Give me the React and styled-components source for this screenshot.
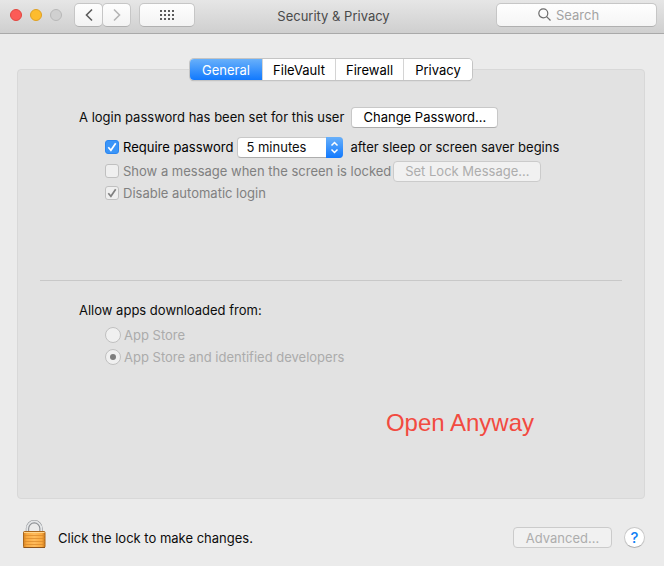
import React, { useState } from 'react';
import styled, { createGlobalStyle, css } from 'styled-components';

const GlobalStyle = createGlobalStyle`
  * {
    box-sizing: border-box;
  }

  body {
    margin: 0;
    background: #ebebeb;
    color: #0c0c0c;
    font-family: Inter, "Liberation Sans", sans-serif;
    font-size: 13px;
    line-height: 16px;
  }

  button, input, select {
    margin: 0;
    font: inherit;
    color: inherit;
  }
`;

const Window = styled.div`
  display: flex;
  flex-direction: column;
  min-height: 100vh;
`;

const Toolbar = styled.header`
  display: grid;
  grid-template-columns: 1fr auto 1fr;
  align-items: center;
  height: 34px;
  padding: 0 7px 4px 10px;
  background: linear-gradient(#e6e6e6, #cfcfcf);
  border-bottom: 1px solid #a9a9a9;
`;

const ToolbarLeft = styled.div`
  display: flex;
  align-items: center;
`;

const Lights = styled.div`
  display: flex;
  gap: 8px;
  margin-right: 13px;
`;

const Light = styled.button`
  width: 12px;
  height: 12px;
  padding: 0;
  border: 1px solid ${({ $edge }) => $edge};
  border-radius: 50%;
  background: ${({ $fill }) => $fill};
`;

const ToolButton = styled.button`
  display: flex;
  align-items: center;
  justify-content: center;
  width: ${({ $wide }) => ($wide ? '56px' : '29px')};
  height: 24px;
  margin-left: ${({ $wide }) => ($wide ? '8px' : '-1px')};
  padding: 0;
  border: 1px solid #c6c6c6;
  border-bottom-color: #b0b0b0;
  border-radius: 5px;
  background: linear-gradient(#fefefe, #f3f3f3);
  color: #5c5c5c;

  &:disabled {
    color: #b5b5b5;
  }
`;

const Title = styled.h1`
  margin: 0;
  padding-top: 3px;
  font-size: 13px;
  font-weight: 400;
  color: #4a4a4a;
`;

const Search = styled.label`
  display: flex;
  align-items: center;
  justify-self: end;
  gap: 5px;
  width: 161px;
  height: 24px;
  padding-left: 41px;
  border: 1px solid #c6c6c6;
  border-bottom-color: #b0b0b0;
  border-radius: 5px;
  background: linear-gradient(#fefefe, #f5f5f5);
  color: #6c6c6c;
`;

const SearchInput = styled.input`
  flex: 1;
  min-width: 0;
  padding: 0;
  border: 0;
  outline: 0;
  background: none;

  &::placeholder {
    color: #a3a3a3;
    opacity: 1;
  }
`;

const Main = styled.main`
  display: flex;
  flex: 1;
  flex-direction: column;
  padding: 25px 19px 0 17px;
`;

const Tabs = styled.div`
  display: flex;
  align-self: center;
  z-index: 1;
  height: 21px;
  margin-bottom: -11px;
  border-radius: 4px;
  background: #fff;
  box-shadow: 0 0 0 1px #c4c4c4, 0 1px 1px 0 #a0a0a0;
  overflow: hidden;
`;

const Tab = styled.button`
  width: ${({ $width }) => $width};
  padding: 0;
  border: 0;
  border-left: 1px solid #d4d4d4;
  background: #fff;
  color: #000;

  &:first-child {
    border-left: 0;
  }

  ${({ $active }) => $active && css`
    background: linear-gradient(#68b0fa, #1179fe);
    color: #fff;
  `}
`;

const Panel = styled.section`
  display: flex;
  flex: 1;
  flex-direction: column;
  padding: 36px 22px 61px;
  border: 1px solid #d8d8d8;
  border-radius: 4px;
  background: #e2e2e2;
`;

const Group = styled.div`
  display: flex;
  flex-direction: column;
  padding-left: 39px;
`;

const Row = styled.div`
  display: flex;
  align-items: center;
  min-height: 22px;
  padding-left: ${({ $indent }) => ($indent ? '26px' : '0')};
  margin-bottom: ${({ $gap }) => $gap || '0'};
`;

const Button = styled.button`
  width: ${({ $width }) => $width};
  height: 21px;
  margin-left: ${({ $gap }) => $gap || '0'};
  padding: 0;
  border: 1px solid #c8c8c8;
  border-bottom-color: #adadad;
  border-radius: 4px;
  background: #fff;
  color: #000;
  white-space: nowrap;

  &:disabled {
    border-color: #cbcbcb;
    background: #f1f1f1;
    color: #adadad;
  }
`;

const Option = styled.label`
  display: flex;
  align-items: center;
  gap: ${({ $gap }) => $gap || '4px'};
  color: ${({ $color }) => $color || '#000'};
  white-space: nowrap;
`;

const CheckWrap = styled.span`
  display: grid;

  > * {
    grid-area: 1 / 1;
  }

  svg {
    z-index: 1;
    pointer-events: none;
    color: #fff;
  }

  input:disabled + svg {
    color: #808080;
  }

  input:not(:checked) + svg {
    visibility: hidden;
  }
`;

const CheckInput = styled.input`
  appearance: none;
  width: 14px;
  height: 14px;
  border: 1px solid #b8b8b8;
  border-radius: 3px;
  background: #fff;

  &:checked {
    border-color: #2b86f0;
    background: #3b95f8;
  }

  &:disabled {
    border-color: #c0c0c0;
    background: #efefef;
  }
`;

const RadioInput = styled.input`
  display: grid;
  place-content: center;
  appearance: none;
  width: 16px;
  height: 16px;
  border: 1px solid #c0c0c0;
  border-radius: 50%;
  background: #f0f0f0;

  &:checked::before {
    content: '';
    width: 6px;
    height: 6px;
    border-radius: 50%;
    background: #7d7d7d;
  }
`;

const SelectWrap = styled.span`
  display: grid;
  width: 106px;
  margin: 0 7px 0 4px;
  border-radius: 4px;

  > * {
    grid-area: 1 / 1;
  }
`;

const Select = styled.select`
  appearance: none;
  height: 21px;
  padding: 0 18px 0 8px;
  border: 1px solid #c8c8c8;
  border-bottom-color: #adadad;
  border-radius: 4px;
  background: #fff;
`;

const Stepper = styled.span`
  display: grid;
  place-content: center;
  justify-self: end;
  width: 17px;
  border-radius: 0 4px 4px 0;
  background: linear-gradient(#68b0fa, #1179fe);
  color: #fff;
  pointer-events: none;
`;

const Divider = styled.hr`
  width: 100%;
  height: 1px;
  margin: 76px 0 18px;
  border: 0;
  background: #c8c8c8;
`;

const Note = styled.p`
  margin: auto 88px 0 auto;
  font-family: "Liberation Sans", sans-serif;
  font-size: 24px;
  line-height: 28px;
  color: #f24a40;
`;

const Footer = styled.footer`
  display: flex;
  align-items: center;
  height: 67px;
  padding: 0 19px 0 23px;
`;

const LockButton = styled.button`
  height: 28px;
  margin: 2px 12px 0 0;
  padding: 0;
  border: 0;
  background: none;
`;

const FooterText = styled.span`
  margin-top: 10px;
`;

const FooterActions = styled.div`
  display: flex;
  align-items: center;
  gap: 12px;
  margin: 10px 0 0 auto;
`;

const HelpButton = styled.button`
  width: 21px;
  height: 21px;
  padding: 0;
  border: 1px solid #c8c8c8;
  border-bottom-color: #adadad;
  border-radius: 50%;
  background: #fff;
  color: #1180f5;
  font-size: 15px;
  font-weight: 500;
`;

const Chevron = ({ right }) => (
  <svg width="8" height="14" viewBox="0 0 8 14" fill="none" stroke="currentColor" strokeWidth="1.6">
    <path d={right ? 'M1 1.5 6.5 7 1 12.5' : 'M7 1.5 1.5 7 7 12.5'} />
  </svg>
);

const DotGrid = () => (
  <svg width="14" height="10" viewBox="0 0 14 10" fill="currentColor" shapeRendering="crispEdges">
    {[0, 4, 8].map((y) =>
      [0, 4, 8, 12].map((x) => <rect key={`${x}-${y}`} x={x} y={y} width="2" height="2" />)
    )}
  </svg>
);

const SearchIcon = () => (
  <svg width="13" height="13" viewBox="0 0 13 13" fill="none" stroke="currentColor" strokeWidth="1.2">
    <circle cx="5.3" cy="5.3" r="4.5" />
    <path d="m8.6 8.6 3.9 3.9" />
  </svg>
);

const LockIcon = () => (
  <svg width="23" height="28" viewBox="0 0 23 28" fill="none">
    <defs>
      <linearGradient id="lockBody" x1="0" x2="1" y1="0" y2="0">
        <stop offset="0" stopColor="#d88421" />
        <stop offset="0.15" stopColor="#f9a93f" />
        <stop offset="0.5" stopColor="#ffbc5c" />
        <stop offset="0.85" stopColor="#f9a93f" />
        <stop offset="1" stopColor="#cd7a1c" />
      </linearGradient>
    </defs>
    <path d="M4.5 13V8.5a6.75 6.75 0 0 1 13.5 0V13" stroke="#8d9094" strokeWidth="3.4" />
    <path d="M4.2 13V8.5a7.05 7.05 0 0 1 14.1 0V13" stroke="#e4e6e8" strokeWidth="1.8" />
    <rect x="0.5" y="11.5" width="21.5" height="16" rx="1" fill="url(#lockBody)" stroke="#a9671c" />
    <path d="M1 12.5h20.5" stroke="#ffd58c" />
    <path d="M1 15.5h20.5M1 18.5h20.5M1 21.5h20.5M1 24.5h20.5" stroke="#d98a2c" strokeOpacity="0.75" />
    <path d="M0.5 27.5h21.5" stroke="#8d541b" />
  </svg>
);

const Checkbox = (props) => (
  <CheckWrap>
    <CheckInput type="checkbox" {...props} />
    <svg width="14" height="14" viewBox="0 0 14 14" fill="none" stroke="currentColor" strokeWidth="1.7">
      <path d="m3.3 7.3 2.6 3 4.8-7" />
    </svg>
  </CheckWrap>
);

const tabs = [
  { name: 'General', width: '72px' },
  { name: 'FileVault', width: '73px' },
  { name: 'Firewall', width: '68px' },
  { name: 'Privacy', width: '69px' },
];

const App = () => {
  const [active, setActive] = useState('General');

  return (
    <Window>
      <GlobalStyle />
      <Toolbar>
        <ToolbarLeft>
          <Lights>
            <Light aria-label="Close" $fill="#fc5b57" $edge="#e2463f" />
            <Light aria-label="Minimize" $fill="#fdbc2e" $edge="#dfa023" />
            <Light aria-label="Zoom" $fill="#d0d0d0" $edge="#b8b8b8" disabled />
          </Lights>
          <ToolButton aria-label="Back"><Chevron /></ToolButton>
          <ToolButton aria-label="Forward" disabled><Chevron right /></ToolButton>
          <ToolButton aria-label="Show all" $wide><DotGrid /></ToolButton>
        </ToolbarLeft>
        <Title>Security &amp; Privacy</Title>
        <Search>
          <SearchIcon />
          <SearchInput type="text" placeholder="Search" aria-label="Search" />
        </Search>
      </Toolbar>

      <Main>
        <Tabs role="tablist">
          {tabs.map((tab) => (
            <Tab
              key={tab.name}
              role="tab"
              aria-selected={active === tab.name}
              $active={active === tab.name}
              $width={tab.width}
              onClick={() => setActive(tab.name)}
            >
              {tab.name}
            </Tab>
          ))}
        </Tabs>
        <Panel>
          <Group>
            <Row $gap="8px">
              <span>A login password has been set for this user</span>
              <Button $width="147px" $gap="7px">Change Password…</Button>
            </Row>
            <Row $indent $gap="2px">
              <Option>
                <Checkbox defaultChecked />
                Require password
              </Option>
              <SelectWrap>
                <Select aria-label="Password delay" defaultValue="5 minutes">
                  <option>5 minutes</option>
                  <option>1 hour</option>
                </Select>
                <Stepper>
                  <svg width="9" height="13" viewBox="0 0 9 13" fill="none" stroke="currentColor" strokeWidth="1.5">
                    <path d="m1.5 4.5 3-3 3 3M1.5 8.5l3 3 3-3" />
                  </svg>
                </Stepper>
              </SelectWrap>
              <span>after sleep or screen saver begins</span>
            </Row>
            <Row $indent>
              <Option $color="#808080">
                <Checkbox disabled />
                Show a message when the screen is locked
              </Option>
              <Button $width="148px" $gap="2px" disabled>Set Lock Message…</Button>
            </Row>
            <Row $indent>
              <Option $color="#808080">
                <Checkbox defaultChecked disabled />
                Disable automatic login
              </Option>
            </Row>
          </Group>
          <Divider />
          <Group>
            <Row $gap="3px">Allow apps downloaded from:</Row>
            <Row $indent>
              <Option $color="#ababab" $gap="3px">
                <RadioInput type="radio" name="source" disabled />
                App Store
              </Option>
            </Row>
            <Row $indent>
              <Option $color="#ababab" $gap="3px">
                <RadioInput type="radio" name="source" defaultChecked disabled />
                App Store and identified developers
              </Option>
            </Row>
          </Group>
          <Note>Open Anyway</Note>
        </Panel>
      </Main>

      <Footer>
        <LockButton aria-label="Unlock"><LockIcon /></LockButton>
        <FooterText>Click the lock to make changes.</FooterText>
        <FooterActions>
          <Button $width="99px" disabled>Advanced…</Button>
          <HelpButton aria-label="Help">?</HelpButton>
        </FooterActions>
      </Footer>
    </Window>
  );
};

export default App;
